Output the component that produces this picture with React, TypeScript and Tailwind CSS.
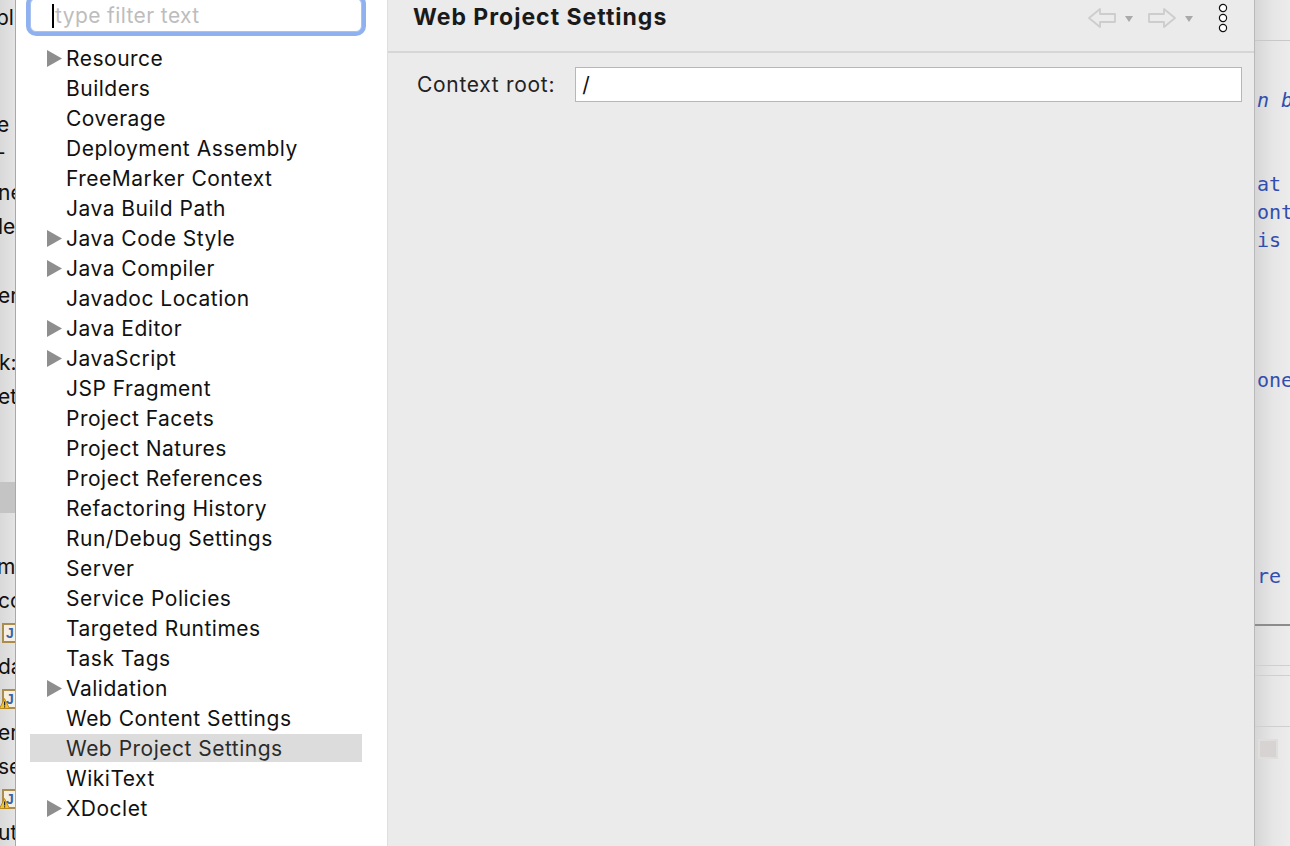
import React from "react";

const items: { label: string; arrow?: boolean; selected?: boolean }[] = [
  { label: "Resource", arrow: true },
  { label: "Builders" },
  { label: "Coverage" },
  { label: "Deployment Assembly" },
  { label: "FreeMarker Context" },
  { label: "Java Build Path" },
  { label: "Java Code Style", arrow: true },
  { label: "Java Compiler", arrow: true },
  { label: "Javadoc Location" },
  { label: "Java Editor", arrow: true },
  { label: "JavaScript", arrow: true },
  { label: "JSP Fragment" },
  { label: "Project Facets" },
  { label: "Project Natures" },
  { label: "Project References" },
  { label: "Refactoring History" },
  { label: "Run/Debug Settings" },
  { label: "Server" },
  { label: "Service Policies" },
  { label: "Targeted Runtimes" },
  { label: "Task Tags" },
  { label: "Validation", arrow: true },
  { label: "Web Content Settings" },
  { label: "Web Project Settings", selected: true },
  { label: "WikiText" },
  { label: "XDoclet", arrow: true },
];

function Tri() {
  return (
    <svg width="15" height="17" viewBox="0 0 15 17">
      <polygon points="0,0 15,8.5 0,17" fill="#8e8e8e" />
    </svg>
  );
}

function JIcon({ warn }: { warn?: boolean }) {
  return (
    <div className="relative w-[16px] h-[22px]">
      <div className="absolute left-[2px] top-[1px] w-[16px] h-[20px] border-2 border-[#a98c4e] bg-[#f4efe2] flex items-center justify-center">
        <span className="text-[14px] font-bold text-[#3a64a8] leading-none" style={{ fontFamily: "Liberation Sans, sans-serif" }}>J</span>
      </div>
      {warn && (
        <svg className="absolute left-[-1px] top-[10px]" width="11" height="11" viewBox="0 0 11 11">
          <polygon points="5.5,0.5 10.5,10.5 0.5,10.5" fill="#f2c230" stroke="#b08010" strokeWidth="0.8" />
          <rect x="5" y="3.5" width="1.2" height="4" fill="#222" />
          <rect x="5" y="8.3" width="1.2" height="1.2" fill="#222" />
        </svg>
      )}
    </div>
  );
}

function LeftStrip() {
  const t = "text-[21px] leading-none text-[#111] whitespace-nowrap";
  return (
    <div
      className="w-[16px] h-full shrink-0 bg-gradient-to-r from-[#d9d9d9] to-[#e4e4e4] border-r border-[#a9a9a9] overflow-hidden flex flex-col"
      style={{ fontFamily: "Inter, sans-serif" }}
    >
      <div className="h-[7px]" />
      <div className={t + " -ml-[4px] h-[22px]"}>pl</div>
      <div className="h-[85px]" />
      <div className={t + " -ml-[3px] h-[22px]"}>e</div>
      <div className="h-[6px]" />
      <div className={t + " -ml-[4px] h-[22px]"}>-</div>
      <div className="h-[18px]" />
      <div className={t + " -ml-[2px] h-[34px]"}>ne</div>
      <div className={t + " -ml-[2px] h-[22px]"}>le</div>
      <div className="h-[47px]" />
      <div className={t + " -ml-[2px] h-[22px]"}>er</div>
      <div className="h-[45px]" />
      <div className={t + " -ml-[1px] h-[34px]"}>k:</div>
      <div className={t + " -ml-[2px] h-[22px]"}>et</div>
      <div className="h-[74px]" />
      <div className="h-[31px] bg-[#c4c4c4]" />
      <div className="h-[43px]" />
      <div className={t + " -ml-[3px] h-[34px]"}>m.</div>
      <div className={t + " -ml-[2px] h-[32px]"}>cc</div>
      <JIcon />
      <div className="h-[12px]" />
      <div className={t + " -ml-[2px] h-[32px]"}>da</div>
      <JIcon warn />
      <div className="h-[12px]" />
      <div className={t + " -ml-[2px] h-[34px]"}>er</div>
      <div className={t + " -ml-[2px] h-[32px]"}>se</div>
      <JIcon warn />
      <div className="h-[12px]" />
      <div className={t + " -ml-[2px] h-[22px]"}>ut</div>
    </div>
  );
}

function RightStrip() {
  const t = "text-[20px] leading-none text-[#2f4fb0] whitespace-nowrap h-[28px] flex items-center pl-[2px]";
  return (
    <div
      className="w-[36px] h-full shrink-0 bg-gradient-to-r from-[#d6d6d6] via-[#e6e6e6] to-[#ececec] border-l border-[#b9b9b9] overflow-hidden flex flex-col"
      style={{ fontFamily: "'DejaVu Sans Mono', 'Liberation Mono', monospace" }}
    >
      <div className="h-[40px]" />
      <div className="h-[1px] bg-[#c8c8c8]" />
      <div className="h-[45px]" />
      <div className={t + " italic text-[#1b2fe0]"}>n b</div>
      <div className="h-[56px]" />
      <div className={t}>at</div>
      <div className={t}>ont</div>
      <div className={t}>is</div>
      <div className="h-[112px]" />
      <div className={t}>one</div>
      <div className="h-[168px]" />
      <div className={t}>re</div>
      <div className="h-[34px]" />
      <div className="h-[2px] bg-[#8c8c8c]" />
      <div className="h-[39px]" />
      <div className="h-[1px] bg-[#cfcfcf]" />
      <div className="h-[9px]" />
      <div className="h-[1px] bg-[#cfcfcf]" />
      <div className="h-[50px]" />
      <div className="h-[1px] bg-[#cfcfcf]" />
      <div className="h-[12px]" />
      <div className="ml-[3px] w-[20px] h-[20px] bg-[#d8d3d3] border-2 border-[#e0dddd]" />
    </div>
  );
}

function ArrowIcon({ dir }: { dir: "left" | "right" }) {
  const pts =
    dir === "left"
      ? "1,10 12,1 12,6 27,6 27,14 12,14 12,19"
      : "27,10 16,1 16,6 1,6 1,14 16,14 16,19";
  return (
    <svg width="28" height="20" viewBox="0 0 28 20">
      <polygon points={pts} fill="none" stroke="#cdcdcd" strokeWidth="1.8" strokeLinejoin="round" />
    </svg>
  );
}

function DropTri() {
  return (
    <svg width="8" height="6" viewBox="0 0 8 6">
      <polygon points="0,0 8,0 4,6" fill="#a9a9a9" />
    </svg>
  );
}

export default function App() {
  return (
    <div
      className="w-[1290px] h-[846px] flex overflow-hidden bg-white"
      style={{ fontFamily: "Inter, 'Noto Sans', sans-serif" }}
    >
      <LeftStrip />
      {/* Tree panel */}
      <div className="w-[372px] shrink-0 h-full bg-white border-r border-[#dedede] pl-[14px] flex flex-col">
        <div className="-mt-[2px] w-[332px] h-[34px] rounded-[6px] bg-white border border-[#a9c1ee] shadow-[0_0_0_4px_#8fb1f0] flex items-center pl-[21px]">
          <div className="w-[2px] h-[24px] bg-black mr-[1px] mt-[2px]" />
          <span className="text-[21px] text-[#bdbdbd] leading-none tracking-[0.4px]">type filter text</span>
        </div>
        <div className="mt-[11px] w-[332px] flex flex-col">
          {items.map((it) => (
            <div key={it.label} className="h-[30px] flex items-center">
              <div
                className={
                  "w-full h-[28px] flex items-center " + (it.selected ? "bg-[#dcdcdc]" : "")
                }
              >
                <div className="w-[36px] pl-[17px] flex items-center">{it.arrow && <Tri />}</div>
                <span
                  className={
                    "text-[21px] leading-none whitespace-nowrap tracking-[0.5px] " +
                    (it.selected ? "text-[#2b2b2b]" : "text-[#111111]")
                  }
                >
                  {it.label}
                </span>
              </div>
            </div>
          ))}
        </div>
      </div>
      {/* Right panel */}
      <div className="flex-1 h-full bg-[#ebebeb] flex flex-col">
        <div className="h-[51px] flex items-start pt-[3px] pl-[25px] pr-[26px]">
          <div className="text-[23px] font-bold text-[#1a1a1a] leading-[28px] tracking-[1px] flex-1">Web Project Settings</div>
          <div className="flex items-start">
            <div className="flex items-center mt-[5px]">
              <ArrowIcon dir="left" />
              <div className="ml-[9px] mt-[1px]"><DropTri /></div>
              <div className="ml-[15px]"><ArrowIcon dir="right" /></div>
              <div className="ml-[9px] mt-[1px]"><DropTri /></div>
            </div>
            <svg className="ml-[25px]" width="10" height="30" viewBox="0 0 10 30">
              <circle cx="5" cy="5" r="3.6" fill="white" stroke="#111" strokeWidth="1.2" />
              <circle cx="5" cy="15" r="3.6" fill="white" stroke="#111" strokeWidth="1.2" />
              <circle cx="5" cy="25" r="3.6" fill="white" stroke="#111" strokeWidth="1.2" />
            </svg>
          </div>
        </div>
        <div className="h-[2px] bg-[#d6d6d6]" />
        <div className="mt-[14px] flex items-center pl-[29px] pr-[12px]">
          <span className="text-[21px] text-[#222] whitespace-nowrap tracking-[0.7px]">Context root:</span>
          <div className="ml-[20px] flex-1 h-[35px] bg-white border border-[#b7b7b7] flex items-center pl-[6px]">
            <span className="text-[21px] text-[#111]">/</span>
          </div>
        </div>
      </div>
      <RightStrip />
    </div>
  );
}
